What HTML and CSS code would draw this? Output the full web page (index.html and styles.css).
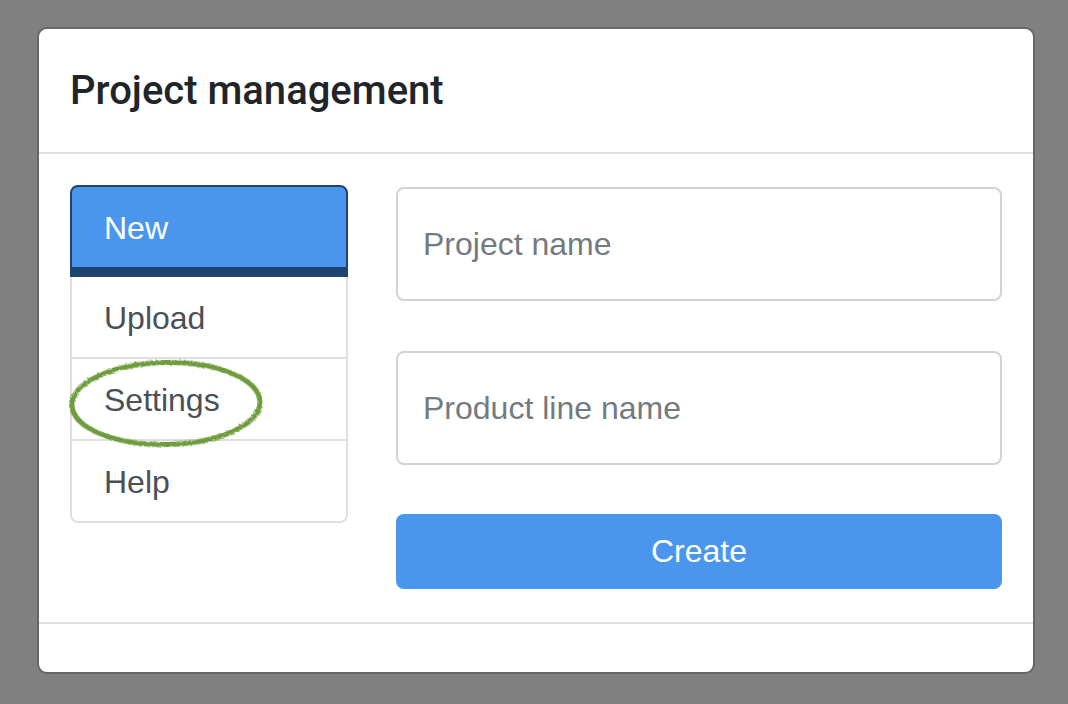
FILE: index.html
```html
<!DOCTYPE html>
<html>
<head>
<meta charset="utf-8">
<link rel="stylesheet" href="styles.css">
</head>
<body>
<div class="backdrop">
  <div class="modal">
    <div class="modal-header">
      <h5 class="modal-title">Project management</h5>
    </div>
    <div class="modal-body">
      <div class="list-wrap">
        <div class="list-group">
          <div class="item active">New</div>
          <div class="item">Upload</div>
          <div class="item">Settings</div>
          <div class="item last">Help</div>
        </div>
        <svg class="circle" width="204" height="94" viewBox="0 0 204 94">
          <defs>
            <filter id="rough" x="-10%" y="-10%" width="120%" height="120%">
              <feTurbulence type="fractalNoise" baseFrequency="1.1" numOctaves="2" seed="5"/>
              <feDisplacementMap in="SourceGraphic" scale="3.5"/>
            </filter>
          </defs>
          <ellipse cx="100" cy="46.5" rx="94" ry="41" fill="none" stroke="#6e9c3c" stroke-width="5" filter="url(#rough)" transform="rotate(-1 100 46.5)"/>
        </svg>
      </div>
      <div class="form">
        <input class="field" type="text" placeholder="Project name">
        <input class="field" type="text" placeholder="Product line name">
        <button class="btn">Create</button>
      </div>
    </div>
    <div class="modal-footer"></div>
  </div>
</div>
</body>
</html>
```

FILE: styles.css
```css
html, body {
  margin: 0;
  padding: 0;
  background: #808080;
}
body {
  font-family: "Liberation Sans", Arial, sans-serif;
  width: 1068px;
  height: 704px;
  overflow: hidden;
}
.backdrop {
  padding: 27px 0 0 37px;
}
.modal {
  width: 994px;
  background: #fff;
  border: 2px solid #666666;
  border-radius: 10px;
}
.modal-header {
  padding: 32px 31px 31px 31px;
  border-bottom: 2px solid #dee2e6;
}
.modal-title {
  margin: 0;
  font-family: Roboto, "Liberation Sans", sans-serif;
  font-weight: 500;
  font-size: 40px;
  line-height: 60px;
  color: #212529;
}
.modal-body {
  padding: 33px 31px 33px 31px;
  display: grid;
  grid-template-columns: 278px 1fr;
  column-gap: 48px;
  align-items: start;
}
.list-wrap {
  position: relative;
  margin-top: -2px;
}
.list-group {
  display: flex;
  flex-direction: column;
}
.item {
  padding: 17px 32px 15px 32px;
  font-size: 32px;
  line-height: 48px;
  color: #495057;
  border: 2px solid #dfdfdf;
  border-top: none;
}
.item.active {
  padding: 17px 32px 15px 32px;
  background: #4a96ec;
  color: #fff;
  border: 2px solid #1f4470;
  border-bottom-width: 10px;
  border-radius: 8px 8px 0 0;
}
.item.last {
  border-radius: 0 0 8px 8px;
}
.circle {
  position: absolute;
  left: -4px;
  top: 172px;
}
.form {
  display: flex;
  flex-direction: column;
  gap: 50px;
}
.field {
  box-sizing: border-box;
  height: 114px;
  width: 100%;
  margin: 0;
  border: 2px solid #ced4da;
  border-radius: 8px;
  padding: 0 25px;
  font-family: "Liberation Sans", Arial, sans-serif;
  font-size: 32px;
  color: #495057;
  outline: none;
}
.field::placeholder {
  color: #737a80;
}
.btn {
  height: 75px;
  width: 100%;
  margin-top: -1px;
  border: none;
  border-radius: 8px;
  background: #4a96ec;
  color: #fff;
  font-family: "Liberation Sans", Arial, sans-serif;
  font-size: 32px;
  cursor: pointer;
}
.modal-footer {
  height: 48px;
  border-top: 2px solid #dee2e6;
}
```
